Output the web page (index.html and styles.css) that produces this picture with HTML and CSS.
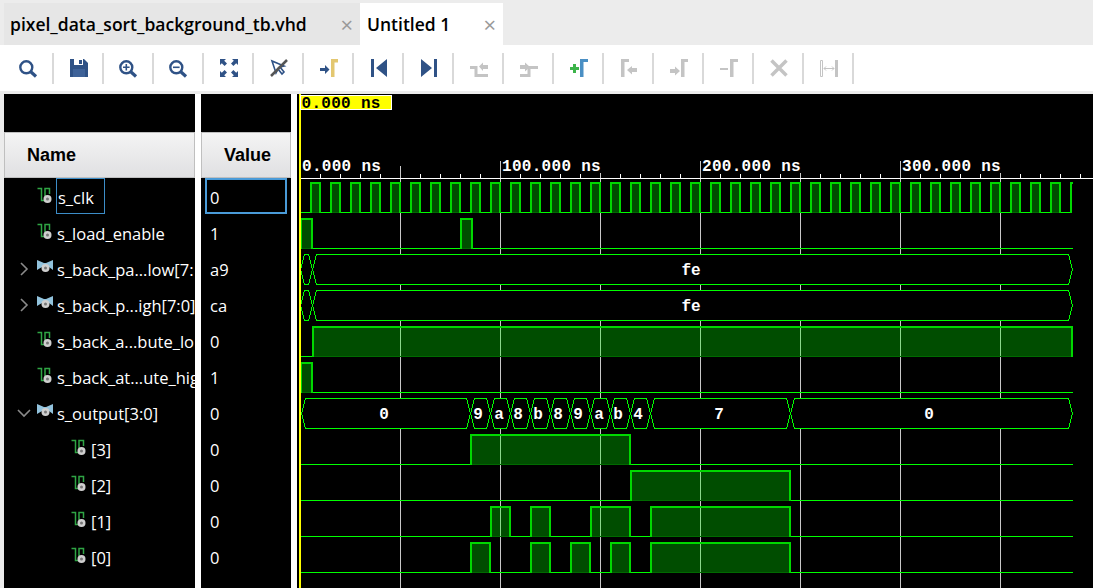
FILE: index.html

```html
<!DOCTYPE html>
<html>
<head>
<meta charset="utf-8">
<title>Untitled 1</title>
<link rel="stylesheet" href="styles.css">
</head>
<body>

<div class="tabs">
  <div class="tab">pixel_data_sort_background_tb.vhd <span class="close">&times;</span></div>
  <div class="tab active">Untitled 1 <span class="close">&times;</span></div>
</div>

<div class="toolbar">
  <div class="btn"><svg viewBox="0 0 20 20"><circle class="ln" cx="7.3" cy="9.3" r="6"/><path class="ln thick" d="M11.5 13.5L17 18.5"/></svg></div>
  <div class="btn"><svg viewBox="0 0 20 20"><path class="blue" d="M1 1H15L19 5V19H1Z"/><path class="white" d="M5 1H14V7H5Z"/><path class="blue" d="M10 2H13V6H10Z"/><path class="mid" d="M4 11H16V19H4Z"/></svg></div>
  <div class="btn"><svg viewBox="0 0 20 20"><circle class="ln" cx="7.3" cy="9.3" r="6"/><path class="ln thick" d="M11.5 13.5L17 18.5"/><path class="ln thin" d="M7.3 6V12.6M4 9.3H10.6"/></svg></div>
  <div class="btn"><svg viewBox="0 0 20 20"><circle class="ln" cx="7.3" cy="9.3" r="6"/><path class="ln thick" d="M11.5 13.5L17 18.5"/><path class="ln thin" d="M4 9.3H10.6"/></svg></div>
  <div class="btn"><svg viewBox="0 0 20 20"><path class="blue" d="M1 1H7L5.2 2.8L8 5.6L5.6 8L2.8 5.2L1 7ZM19 1V7L17.2 5.2L14.4 8L12 5.6L14.8 2.8L13 1ZM1 19V13L2.8 14.8L5.6 12L8 14.4L5.2 17.2L7 19ZM19 19H13L14.8 17.2L12 14.4L14.4 12L17.2 14.8L19 13Z"/></svg></div>
  <div class="btn"><svg viewBox="0 0 20 20"><path class="ln thin" d="M3 3L7 15L9 11L13 16L15 14L11 9L15 8Z"/><path class="slash" d="M2 18L18 2"/></svg></div>
  <div class="btn"><svg viewBox="0 0 20 20"><path class="blue" d="M1 10H6V7L10.5 11.5L6 16V13H1Z"/><path class="tan" d="M12 19V1H19V4.5H15.5V19Z"/></svg></div>
  <div class="btn"><svg viewBox="0 0 20 20"><path class="blue" d="M2 1H5V19H2ZM18 1V19L7 10Z"/></svg></div>
  <div class="btn"><svg viewBox="0 0 20 20"><path class="blue" d="M15 1H18V19H15ZM2 1V19L13 10Z"/></svg></div>
  <div class="btn"><svg viewBox="0 0 20 20"><path class="off-ln" d="M1 9.5H7V17.5H19"/><path class="off" d="M10 8.5L14 4.5V7H19V11H14V13Z"/></svg></div>
  <div class="btn"><svg viewBox="0 0 20 20"><path class="off-ln" d="M1 17.5H10V9.5H19"/><path class="off" d="M1 7V11H6V13.5L11 9L6 4.5V7Z"/></svg></div>
  <div class="btn"><svg viewBox="0 0 20 20"><path class="green" d="M1 9H4V6H7V9H10V12H7V15H4V12H1Z"/><path class="sky" d="M11 19V1H19V4H14.5V19Z"/></svg></div>
  <div class="btn"><svg viewBox="0 0 20 20"><path class="off" d="M2 19V1H10V4H5.5V19Z"/><path class="off" d="M8 12L13 8V10H18V14H13V16.5Z"/></svg></div>
  <div class="btn"><svg viewBox="0 0 20 20"><path class="off" d="M1 11H6V8.5L11 13L6 17.5V15H1Z"/><path class="off" d="M12 19V1H19V4H15.5V19Z"/></svg></div>
  <div class="btn"><svg viewBox="0 0 20 20"><path class="off" d="M1 10H9V12H1Z"/><path class="off" d="M11 19V1H19V4H14.5V19Z"/></svg></div>
  <div class="btn"><svg viewBox="0 0 20 20"><path class="off-x" d="M2.5 2.5L17.5 17.5M17.5 2.5L2.5 17.5"/></svg></div>
  <div class="btn"><svg viewBox="0 0 20 20"><path class="off-hollow" d="M1.5 2.5H3.5V18.5H1.5Z"/><path class="off" d="M16 2H19V19H16Z"/><path class="off-thin" d="M5 10.5H15M7 8.5L5 10.5L7 12.5M13 8.5L15 10.5L13 12.5"/></svg></div>
</div>

<div class="main">
  <div class="col names">
    <div class="spacer"></div>
    <div class="head"><span>Name</span></div>
    <div class="list">
      <div class="row"><span class="chev"></span><svg class="sig" viewBox="0 0 16 17"><use href="#logic"/></svg><span class="label selected">s_clk</span></div>
      <div class="row"><span class="chev"></span><svg class="sig" viewBox="0 0 16 17"><use href="#logic"/></svg><span class="label">s_load_enable</span></div>
      <div class="row"><svg class="chev" viewBox="0 0 20 20"><path d="M4 4L10 10L4 16"/></svg><svg class="sig" viewBox="0 0 16 17"><use href="#bus"/></svg><span class="label">s_back_pa...low[7:</span></div>
      <div class="row"><svg class="chev" viewBox="0 0 20 20"><path d="M4 4L10 10L4 16"/></svg><svg class="sig" viewBox="0 0 16 17"><use href="#bus"/></svg><span class="label">s_back_p...igh[7:0]</span></div>
      <div class="row"><span class="chev"></span><svg class="sig" viewBox="0 0 16 17"><use href="#logic"/></svg><span class="label">s_back_a...bute_lo</span></div>
      <div class="row"><span class="chev"></span><svg class="sig" viewBox="0 0 16 17"><use href="#logic"/></svg><span class="label">s_back_at...ute_hig</span></div>
      <div class="row"><svg class="chev" viewBox="0 0 20 20"><path d="M1 7L7 13L13 7"/></svg><svg class="sig" viewBox="0 0 16 17"><use href="#bus"/></svg><span class="label">s_output[3:0]</span></div>
      <div class="row child"><span class="chev"></span><svg class="sig" viewBox="0 0 16 17"><use href="#logic"/></svg><span class="label">[3]</span></div>
      <div class="row child"><span class="chev"></span><svg class="sig" viewBox="0 0 16 17"><use href="#logic"/></svg><span class="label">[2]</span></div>
      <div class="row child"><span class="chev"></span><svg class="sig" viewBox="0 0 16 17"><use href="#logic"/></svg><span class="label">[1]</span></div>
      <div class="row child"><span class="chev"></span><svg class="sig" viewBox="0 0 16 17"><use href="#logic"/></svg><span class="label">[0]</span></div>
    </div>
  </div>

  <div class="col values">
    <div class="spacer"></div>
    <div class="head"><span>Value</span></div>
    <div class="list">
      <div class="row selected-val">0</div>
      <div class="row">1</div>
      <div class="row">a9</div>
      <div class="row">ca</div>
      <div class="row">0</div>
      <div class="row">1</div>
      <div class="row">0</div>
      <div class="row">0</div>
      <div class="row">0</div>
      <div class="row">0</div>
      <div class="row">0</div>
    </div>
  </div>

  <svg class="wave" viewBox="297 94 796 494">
    <defs>
      <g id="logic">
        <path class="sig-ln" d="M0.5 1.5H4.5V13.5H8M8 9V1.5H12.5V7"/>
        <circle class="sig-dot" cx="10.5" cy="12" r="4"/>
        <circle class="sig-hole" cx="10.5" cy="12" r="1.5"/>
      </g>
      <g id="bus">
        <path class="sig-bus" d="M0 1L7 4L9 4L16 1V11L12 8H5L0 11Z"/>
        <circle class="sig-dot" cx="8.5" cy="9" r="4"/>
        <circle class="sig-hole" cx="8.5" cy="9" r="1.5"/>
      </g>
      <pattern id="clk" x="310" y="182" width="20" height="31" patternUnits="userSpaceOnUse">
        <path class="hi" d="M1 31V1H10V31"/>
        <path class="foot" d="M2 30.5H9"/>
      </pattern>
    </defs>

    <!-- ruler -->
    <path class="grid" d="M400.5 166V588M500.5 161V588M600.5 173V588M700.5 161V588M800.5 173V588M900.5 161V588M1000.5 173V588"/>
    <path class="tick" d="M301 178.5H1093M320.5 174V178M340.5 174V178M360.5 174V178M380.5 174V178M420.5 174V178M440.5 174V178M460.5 174V178M480.5 174V178M520.5 174V178M540.5 174V178M560.5 174V178M580.5 174V178M620.5 174V178M640.5 174V178M660.5 174V178M680.5 174V178M720.5 174V178M740.5 174V178M760.5 174V178M780.5 174V178M820.5 174V178M840.5 174V178M860.5 174V178M880.5 174V178M920.5 174V178M940.5 174V178M960.5 174V178M980.5 174V178M1020.5 174V178M1040.5 174V178M1060.5 174V178M1080.5 174V178"/>
    <text class="mono time" x="302" y="171">0.000 ns</text>
    <text class="mono time" x="502" y="171">100.000 ns</text>
    <text class="mono time" x="702" y="171">200.000 ns</text>
    <text class="mono time" x="902" y="171">300.000 ns</text>

    <!-- low levels -->
    <path class="base" d="M301 212.5H1072M301 248.5H1073M301 356.5H1073M301 392.5H1073M301 464.5H1073M301 500.5H1073M301 536.5H1073M301 572.5H1073"/>

    <!-- s_clk -->
    <rect x="310" y="182" width="760" height="31" fill="url(#clk)"/>
    <path class="stub" d="M1071 213V183H1073"/>

    <!-- high levels -->
    <path class="hi" d="M301 249V219H312V249"/>
    <path class="hi" d="M461 249V219H472V249"/>
    <path class="hi" d="M313 357V327H1072V357"/>
    <path class="hi" d="M301 393V363H312V393"/>
    <path class="hi" d="M471 465V435H630V465"/>
    <path class="hi" d="M631 501V471H790V501"/>
    <path class="hi" d="M491 537V507H510V537"/>
    <path class="hi" d="M531 537V507H550V537"/>
    <path class="hi" d="M591 537V507H630V537"/>
    <path class="hi" d="M651 537V507H790V537"/>
    <path class="hi" d="M471 573V543H490V573"/>
    <path class="hi" d="M531 573V543H550V573"/>
    <path class="hi" d="M571 573V543H590V573"/>
    <path class="hi" d="M611 573V543H630V573"/>
    <path class="hi" d="M651 573V543H790V573"/>
    <path class="foot" d="M302 248.5H311M462 248.5H471M314 356.5H1071M302 392.5H311M472 464.5H629M632 500.5H789M492 536.5H509M532 536.5H549M592 536.5H629M652 536.5H789M472 572.5H489M532 572.5H549M572 572.5H589M612 572.5H629M652 572.5H789"/>

    <!-- buses -->
    <path class="busv" d="M300.5 269.5L304.5 254.5H308.5L312.5 269.5L308.5 284.5H304.5Z"/>
    <path class="busv" d="M312.5 269.5L316.5 254.5H1068.5L1072.5 269.5L1068.5 284.5H316.5Z"/>
    <path class="busv" d="M300.5 305.5L304.5 290.5H308.5L312.5 305.5L308.5 320.5H304.5Z"/>
    <path class="busv" d="M312.5 305.5L316.5 290.5H1068.5L1072.5 305.5L1068.5 320.5H316.5Z"/>
    <path class="busv" d="M301.5 413.5L305.5 398.5H466.5L470.5 413.5L466.5 428.5H305.5Z"/>
    <path class="busv" d="M470.5 413.5L474.5 398.5H486.5L490.5 413.5L486.5 428.5H474.5Z"/>
    <path class="busv" d="M490.5 413.5L494.5 398.5H506.5L510.5 413.5L506.5 428.5H494.5Z"/>
    <path class="busv" d="M510.5 413.5L514.5 398.5H526.5L530.5 413.5L526.5 428.5H514.5Z"/>
    <path class="busv" d="M530.5 413.5L534.5 398.5H546.5L550.5 413.5L546.5 428.5H534.5Z"/>
    <path class="busv" d="M550.5 413.5L554.5 398.5H566.5L570.5 413.5L566.5 428.5H554.5Z"/>
    <path class="busv" d="M570.5 413.5L574.5 398.5H586.5L590.5 413.5L586.5 428.5H574.5Z"/>
    <path class="busv" d="M590.5 413.5L594.5 398.5H606.5L610.5 413.5L606.5 428.5H594.5Z"/>
    <path class="busv" d="M610.5 413.5L614.5 398.5H626.5L630.5 413.5L626.5 428.5H614.5Z"/>
    <path class="busv" d="M630.5 413.5L634.5 398.5H646.5L650.5 413.5L646.5 428.5H634.5Z"/>
    <path class="busv" d="M650.5 413.5L654.5 398.5H786.5L790.5 413.5L786.5 428.5H654.5Z"/>
    <path class="busv" d="M790.5 413.5L794.5 398.5H1068.5L1072.5 413.5L1068.5 428.5H794.5Z"/>
    <text class="mono val" x="691" y="275">fe</text>
    <text class="mono val" x="691" y="311">fe</text>
    <text class="mono val" x="384" y="419">0</text>
    <text class="mono val" x="478" y="419">9</text>
    <text class="mono val" x="499" y="419">a</text>
    <text class="mono val" x="518" y="419">8</text>
    <text class="mono val" x="538" y="419">b</text>
    <text class="mono val" x="558" y="419">8</text>
    <text class="mono val" x="578" y="419">9</text>
    <text class="mono val" x="599" y="419">a</text>
    <text class="mono val" x="618" y="419">b</text>
    <text class="mono val" x="638" y="419">4</text>
    <text class="mono val" x="719" y="419">7</text>
    <text class="mono val" x="929" y="419">0</text>

    <!-- cursor -->
    <rect class="cursor" x="299" y="94" width="2" height="494"/>
    <rect class="cursor-tag" x="300.5" y="95.5" width="91" height="14"/>
    <text class="mono tag" x="301.5" y="108">0.000 ns</text>
  </svg>
</div>

</body>
</html>
```

FILE: styles.css

```css
html, body {
  margin: 0;
  width: 1093px;
  height: 588px;
  overflow: hidden;
  background: #ececec;
  font-family: "Open Sans", sans-serif;
}

/* tabs */
.tabs {
  display: flex;
  height: 42px;
  padding: 3px 0 0 4px;
}

.tab {
  display: flex;
  align-items: center;
  width: 356px;
  padding-left: 6px;
  box-sizing: border-box;
  background: #e6e6e6;
  color: #000;
  font-size: 17.5px;
  font-weight: 600;
  white-space: pre;
}

.tab.active {
  width: 143px;
  background: #fff;
  padding-left: 7px;
}

.close {
  margin-left: auto;
  margin-right: 7px;
  color: #999;
  font-size: 22px;
  font-weight: 400;
}

/* toolbar */
.toolbar {
  display: flex;
  align-items: center;
  height: 46px;
  padding-left: 4px;
  background: #fff;
}

.btn {
  display: flex;
  align-items: center;
  justify-content: center;
  box-sizing: border-box;
  width: 50px;
  height: 31px;
  padding-left: 2px;
  border-right: 2px solid #d9d9d9;
}

.btn svg {
  width: 20px;
  height: 20px;
}

.ln { fill: none; stroke: #2f5286; stroke-width: 2.4; }
.ln.thick { stroke-width: 3.2; }
.ln.thin { stroke-width: 1.6; }
.blue { fill: #2f5286; }
.mid { fill: #3e6298; }
.white { fill: #fff; }
.tan { fill: #e3c770; }
.green { fill: #3cb44a; }
.sky { fill: #4a8fc4; }
.slash { stroke: #555; stroke-width: 2.5; }
.off { fill: #c4c4c4; }
.off-ln { fill: none; stroke: #c4c4c4; stroke-width: 3; }
.off-x { fill: none; stroke: #c4c4c4; stroke-width: 3.5; }
.off-hollow { fill: #fff; stroke: #c4c4c4; stroke-width: 1; }
.off-thin { fill: none; stroke: #c4c4c4; stroke-width: 1; }

/* signal columns */
.main {
  display: flex;
  height: 494px;
  margin-top: 3px;
  padding-left: 4px;
  background: #ececec;
}

.col {
  background: #000;
  color: #fff;
  overflow: hidden;
}

.names {
  width: 191px;
}

.values {
  width: 90px;
  border-left: 6px solid #fff;
  border-right: 6px solid #fff;
}

.spacer {
  height: 38px;
}

.head {
  box-sizing: border-box;
  height: 46px;
  display: flex;
  align-items: center;
  padding-left: 22px;
  background: linear-gradient(#f4f4f4, #e0e0e2);
  border: 1px solid #bfbfbf;
  color: #000;
  font-family: "Liberation Sans", sans-serif;
  font-size: 18px;
  font-weight: bold;
}

.list {
  padding-top: 1px;
}

.row {
  display: flex;
  align-items: center;
  height: 36px;
  padding-left: 13px;
  font-size: 16.5px;
  white-space: nowrap;
}

.values .row {
  box-sizing: border-box;
  padding-left: 9px;
}

.values .selected-val {
  width: 82px;
  height: 36px;
  margin: -1px 0 1px 4px;
  padding: 2px 0 0 3px;
  border: 2px solid #4a9bd8;
}

.chev {
  flex: none;
  width: 20px;
  height: 20px;
}

.chev path {
  fill: none;
  stroke: #8a8a8a;
  stroke-width: 1.6;
}

.sig {
  flex: none;
  width: 16px;
  height: 17px;
  margin-right: 4px;
  margin-top: -3px;
}

.child .sig {
  margin-left: 34px;
}

.sig-ln { fill: none; stroke: #2fa544; stroke-width: 1.5; }
.sig-dot { fill: #cfcfcf; }
.sig-hole { fill: #777; }
.sig-bus { fill: #92c3dd; }

.label.selected {
  margin: -2px 0 0 -1px;
  height: 34px;
  line-height: 38px;
  width: 46px;
  padding-left: 1px;
  border: 1px solid #3c8dc8;
}

/* waveform */
.wave {
  display: block;
  flex: none;
  width: 796px;
  height: 494px;
  background: #000;
}

.grid { fill: none; stroke: #c8c8c8; shape-rendering: crispEdges; }
.tick { fill: none; stroke: #fff; shape-rendering: crispEdges; }
.base { fill: none; stroke: #00ff00; shape-rendering: crispEdges; }
.hi { fill: rgba(0, 255, 0, 0.3); stroke: #00d800; stroke-width: 2; shape-rendering: crispEdges; }
.stub { fill: none; stroke: #00d800; stroke-width: 2; shape-rendering: crispEdges; }
.foot { fill: none; stroke: #006a00; shape-rendering: crispEdges; }
.busv { fill: #000; stroke: #00ff00; shape-rendering: crispEdges; }

.mono {
  font-family: "Liberation Mono", monospace;
  font-size: 16px;
  font-weight: bold;
}

.time {
  fill: #fff;
  letter-spacing: 0.3px;
}

.val {
  fill: #fff;
  text-anchor: middle;
}

.tag {
  fill: #000;
  letter-spacing: 0.3px;
}

.cursor { fill: #ffff00; }
.cursor-tag { fill: #ffff00; stroke: #fff; shape-rendering: crispEdges; }
```
